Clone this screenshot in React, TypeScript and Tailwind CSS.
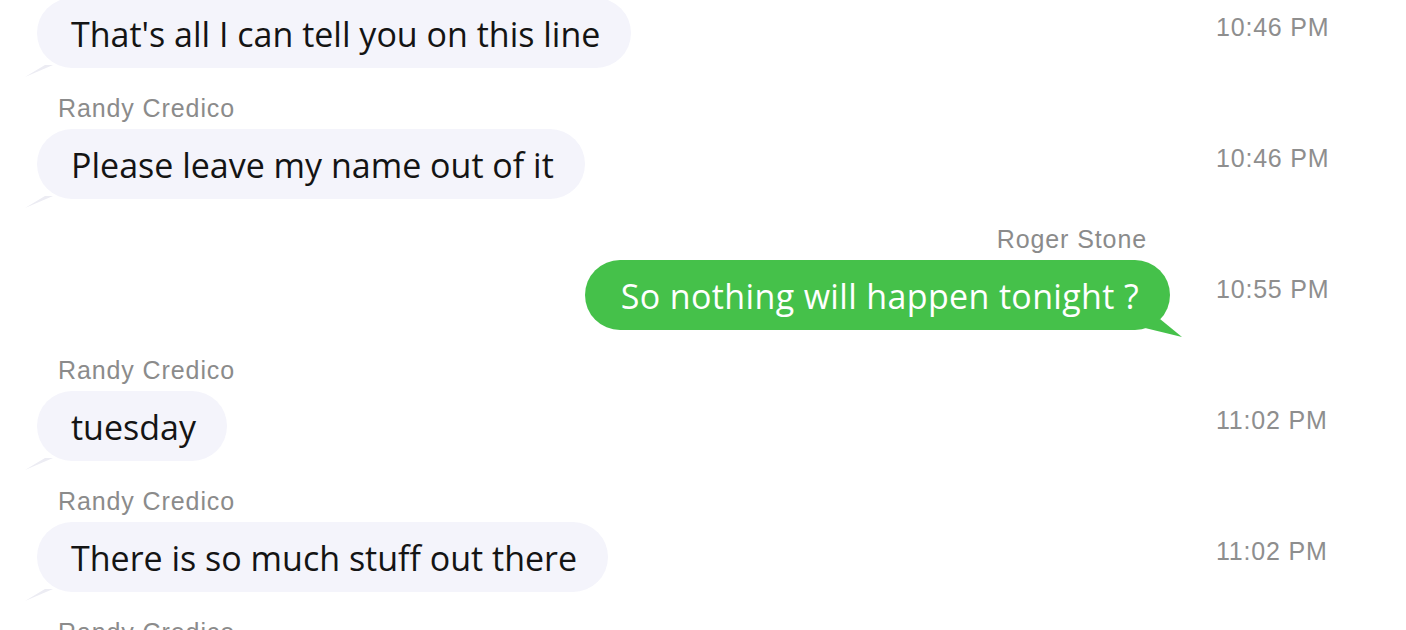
import React from "react";

type Msg = { name?: string; text: string; time: string; sent?: boolean };

const msgs: Msg[] = [
  { text: "That's all I can tell you on this line", time: "10:46 PM" },
  { name: "Randy Credico", text: "Please leave my name out of it", time: "10:46 PM" },
  { name: "Roger Stone", text: "So nothing will happen tonight ?", time: "10:55 PM", sent: true },
  { name: "Randy Credico", text: "tuesday", time: "11:02 PM" },
  { name: "Randy Credico", text: "There is so much stuff out there", time: "11:02 PM" },
  { name: "Randy Credico", text: "", time: "" },
];

const labelFont = { fontFamily: '"Liberation Sans", Arial, sans-serif' };
const msgFont = { fontFamily: '"Open Sans", "Noto Sans", sans-serif' };

function Row({ m }: { m: Msg }) {
  return (
    <div className="flex flex-col pb-[25px]">
      {m.name && (
        <div
          className={`h-[30px] leading-[30px] text-[25px] tracking-[0.9px] text-[#8b8b8b] ${
            m.sent ? "pr-[259px] text-right" : "pl-[58px]"
          }`}
          style={labelFont}
        >
          {m.name}
        </div>
      )}
      {m.text && (
        <div className={`flex ${m.name ? "mt-[6px]" : ""}`}>
          <div className={`flex flex-1 ${m.sent ? "justify-end pr-[46px]" : "pl-[37px]"}`}>
            <div
              className={`relative h-[70px] rounded-[35px] text-[34px] leading-[72px] whitespace-nowrap ${
                m.sent
                  ? "bg-[#45c14a] pl-[36px] pr-[31px] tracking-[0.35px] text-white"
                  : "bg-[#f4f4fb] pl-[34px] pr-[31px] text-[#141414]"
              }`}
              style={msgFont}
            >
              {m.text}
              {m.sent ? (
                <svg className="absolute right-[-13px] bottom-[-9px]" width="40" height="20" viewBox="0 0 40 20">
                  <polygon points="2,9 17,0 39,18" fill="#45c14a" />
                </svg>
              ) : (
                <svg className="absolute left-[-12px] bottom-[-11px]" width="36" height="16" viewBox="0 0 36 16">
                  <polygon points="20,2 28,2 0,14" fill="#ececf3" />
                </svg>
              )}
            </div>
          </div>
          <div className="w-[190px] pt-[14px]">
            <div
              className="h-[30px] leading-[30px] text-[25px] tracking-[0.8px] text-[#8e8e8e]"
              style={labelFont}
            >
              {m.time}
            </div>
          </div>
        </div>
      )}
    </div>
  );
}

export default function App() {
  return (
    <div className="h-[630px] w-[1406px] overflow-hidden bg-white">
      <div className="mt-[-2px] flex flex-col">
        {msgs.map((m, i) => (
          <Row key={i} m={m} />
        ))}
      </div>
    </div>
  );
}
